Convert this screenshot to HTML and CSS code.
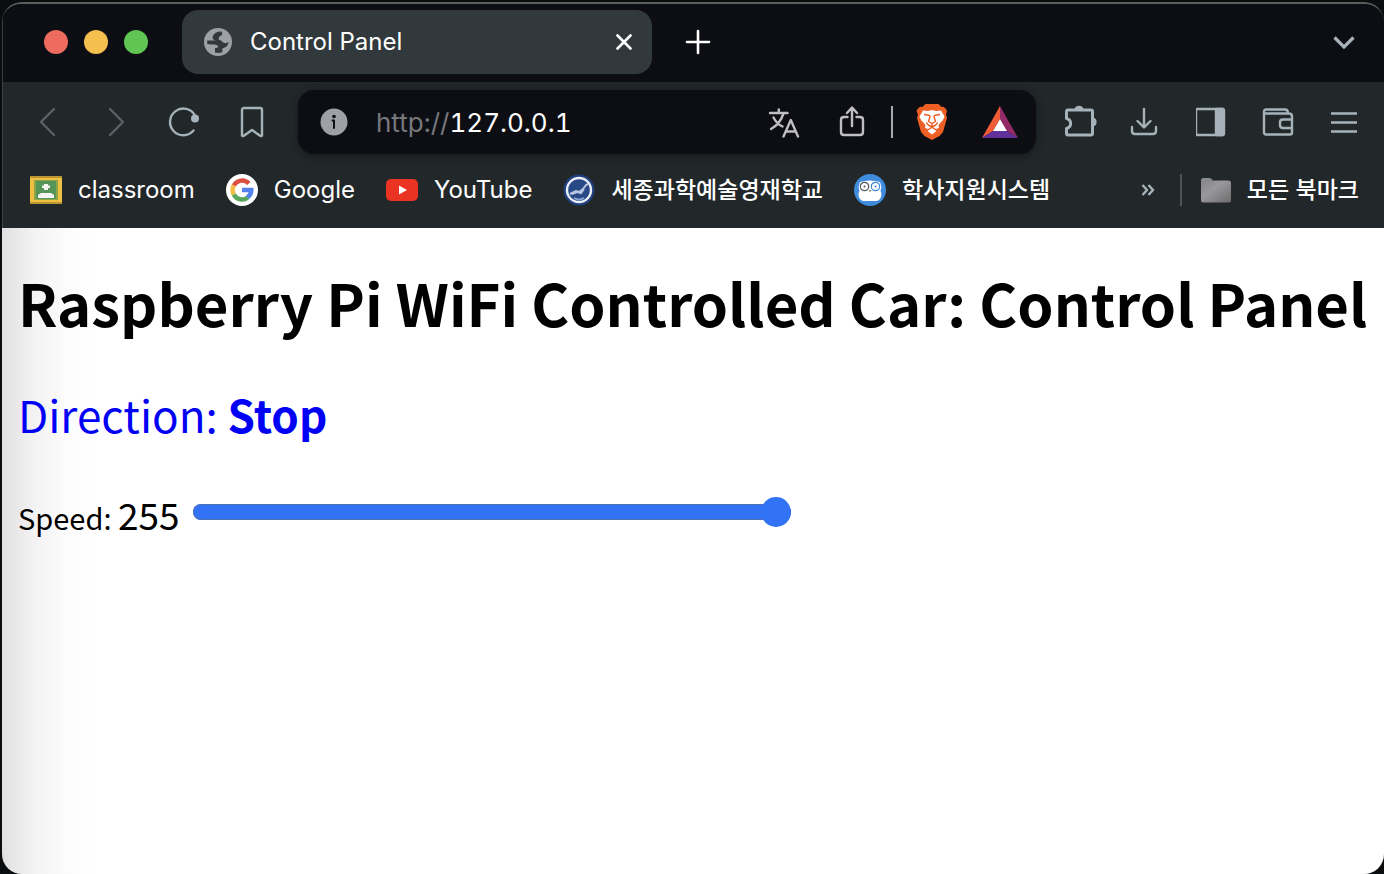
FILE: index.html
```
<!DOCTYPE html>
<html lang="en">
<head>
<meta charset="utf-8">
<title>Control Panel</title>
<link rel="stylesheet" href="styles.css">
</head>
<body>
<div class="window">
  <header class="tabstrip">
    <div class="lights">
      <button class="light red" aria-label="Close window"></button>
      <button class="light yellow" aria-label="Minimize window"></button>
      <button class="light green" aria-label="Zoom window"></button>
    </div>
    <div class="tab">
      <svg width="28" height="28" viewBox="0 0 28 28"><circle cx="14" cy="14" r="14" fill="#9da1a5"/><path d="M17.500 3.500Q12 3 9 7.500C8 11 9.500 12 12 12.500H3.200v3.500C7 17 11 15.500 13.500 17.500c1.500 1.500.5 2.500-2.500 2.500v4.500c4 1 7 0 7.500-.5-.5-2.500-.5-3.500 1-4 2.500-.5 4.500-2.500 5.300-6-2.300 1.500-5 1.500-6.300 0-1-1.500-2-2-4-2.500.5-2 .5-3.500 3-4Q19 6 17.500 3.500z" fill="#32393c"/></svg>
      <span class="tab-title">Control Panel</span>
      <button class="icon-button small" aria-label="Close tab"><svg width="16" height="16" viewBox="0 0 16 16"><path d="M1.500 1.500l13 13M14.500 1.500l-13 13" stroke="#fff" stroke-width="2.600" stroke-linecap="round"/></svg></button>
    </div>
    <button class="icon-button new-tab" aria-label="New tab"><svg width="26" height="26" viewBox="0 0 26 26"><path d="M13 2v22M2 13h22" stroke="#fff" stroke-width="2.600" stroke-linecap="round"/></svg></button>
    <button class="icon-button tab-search" aria-label="Search tabs"><svg width="24" height="24" viewBox="0 0 24 24" fill="none"><path d="M2.500 7.500l9.500 9.500 9.500-9.500" stroke="#a6b2ba" stroke-width="3.200"/></svg></button>
  </header>

  <nav class="toolbar">
    <div class="nav-buttons">
      <button class="icon-button dim" aria-label="Back"><svg width="32" height="32" viewBox="0 0 32 32"><path d="M22 3L9 16l13 13"/></svg></button>
      <button class="icon-button dim" aria-label="Forward"><svg width="32" height="32" viewBox="0 0 32 32"><path d="M10 3l13 13-13 13"/></svg></button>
      <button class="icon-button" aria-label="Reload"><svg width="32" height="32" viewBox="0 0 32 32"><path d="M27 9.500A13.300 13.300 0 1 0 25.500 24.500"/><circle cx="27" cy="12.500" r="4" fill="#a6b2ba" stroke="none"/></svg></button>
      <button class="icon-button" aria-label="Bookmark this page"><svg width="32" height="32" viewBox="0 0 32 32"><path d="M8 2h16q2 0 2 2v25.500q-.5 1-1.500.5L16 24l-8.500 6q-1 .5-1.500-.5V4q0-2 2-2z"/></svg></button>
    </div>
    <div class="address">
      <button class="icon-button small" aria-label="Site information"><svg width="28" height="28" viewBox="0 0 28 28"><circle cx="14" cy="14" r="13.500" fill="#9da1a5" stroke="none"/><circle cx="14" cy="8.500" r="1.800" fill="#0d0e13" stroke="none"/><path d="M12.500 12.500h1.500v7.500" stroke="#0d0e13" stroke-width="2"/></svg></button>
      <span class="url"><span class="scheme">http://</span>127.0.0.1</span>
      <div class="address-actions">
        <button class="icon-button pale" aria-label="Translate"><svg width="32" height="32" viewBox="0 0 32 32"><path d="M2 7h17.500M10.800 3.500V7M15.500 7.500C13 15 8.500 20 3 23M5.500 11.500c2 4 5 7 9 9M15.500 30.500L22.800 14 30 30.500M18 25.500h9.500"/></svg></button>
        <button class="icon-button pale" aria-label="Share"><svg width="32" height="32" viewBox="0 0 32 32"><path d="M16 20V2M11 7l5-5.500L21 7M11.500 11H8q-3 0-3 3v12q0 3 3 3h16q3 0 3-3V14q0-3-3-3h-3.500"/></svg></button>
        <span class="divider bright"></span>
        <button class="icon-button" aria-label="Brave Shields"><svg class="solid" width="32" height="36" viewBox="0 0 32 36"><path d="M9.500 0h13l3 3c2-1 4 1 5.500 4L30 10.500l1 3.500-4 14-3.500 4L16 36l-7.500-4L5 28 1 14l1-3.500L.500 7C2 4 4 2 6.500 3z" fill="#ed5f25"/><path d="M7 6.500l5 .5 4-1 4 1 5-.5 3.500 6-1.500 3.500-4.500 5 .5 3-3 1-4-2.500-4 2.500-3-1 .5-3-4.500-5-1.500-3.500zM16 24l4.500 3-4.500 3.500-4.500-3.500z" fill="#fff"/><path d="M8.500 10.500l5 1 .5 1-1.500 5 3.500 2 3.500-2-1.500-5 .5-1 5-1M16 19.500V22M10.500 19l2.500 2.500L16 23l3-1.500 2.500-2.500" fill="none" stroke="#ed5f25" stroke-width="1.400"/></svg></button>
        <button class="icon-button" aria-label="Brave Rewards"><svg class="solid" width="36" height="32" viewBox="0 0 36 32"><path d="M18 0L0 32l11-7 7-12z" fill="#f15b36"/><path d="M18 0l18 32-11-7-7-12z" fill="#932c66"/><path d="M0 32h36l-11-7H11z" fill="#62309a"/><path d="M18 13l7 12H11z" fill="#fff"/></svg></button>
      </div>
    </div>
    <div class="tools">
      <button class="icon-button" aria-label="Extensions"><svg width="40" height="40" viewBox="0 0 40 40"><path d="M9 8h22q1.500 0 1.500 1.500v22q0 1.500-1.500 1.500H8q-1.500 0-1.500-1.500v-5c5.500-1.500 5.500-8.500 0-10V9.500Q6.500 8 8 8z" stroke-width="3"/><path d="M14.500 7a4.800 4.800 0 0 1 9 0zM33.500 15.500a4.800 4.800 0 0 1 0 9z" fill="#a6b2ba" stroke="none"/></svg></button>
      <button class="icon-button" aria-label="Downloads"><svg width="32" height="32" viewBox="0 0 32 32"><path d="M14 3v18M7.500 15l6.500 6.500 6.500-6.500M2 21v4q0 3 3 3h18q3 0 3-3v-4"/></svg></button>
      <button class="icon-button" aria-label="Side panel"><svg width="32" height="32" viewBox="0 0 32 32"><rect x="0" y="3" width="28" height="26" rx="1.500"/><path d="M20 3h7v26h-7z" fill="#a6b2ba"/></svg></button>
      <button class="icon-button" aria-label="Wallet"><svg width="32" height="32" viewBox="0 0 32 32"><path d="M2 7.500h25q3 0 3 3V26.500q0 2-2 2H4q-2 0-2-2v-21q0-2 2-2h19q3 0 3 4M30 13.500h-9q-3 0-3 3v2.500q0 3 3 3h9"/></svg></button>
      <button class="icon-button" aria-label="Menu"><svg width="32" height="32" viewBox="0 0 32 32"><path d="M3 7.500h26M3 16.500h26M3 25.500h26" stroke-linecap="butt"/></svg></button>
    </div>
  </nav>

  <nav class="bookmarks">
    <a class="bookmark" href="#"><svg width="32" height="32" viewBox="0 0 32 32"><path d="M0 2h32v28H0z" fill="#b99533"/><path d="M0 4h32v24H0z" fill="#edbf42"/><path d="M4 6h24v20H4z" fill="#8fa443"/><path d="M6 7h20v18H6z" fill="#559557"/><path d="M14 10h4v1.500h2v2.500h-2v2h-4v-2h-2v-2.500h2zM8 24v-3l3-2h10l3 2v3z" fill="#f4f4f4"/></svg><span>classroom</span></a>
    <a class="bookmark" href="#"><svg width="32" height="32" viewBox="0 0 32 32" fill="none"><circle cx="16" cy="16" r="16" fill="#fff"/><path d="M7.800 11.500A9.300 9.300 0 0 1 22.800 9.500" stroke="#d95040" stroke-width="4.500"/><path d="M7.800 11.500a9.300 9.300 0 0 0 0 9" stroke="#f2bd42" stroke-width="4.500"/><path d="M7.800 20.500a9.300 9.300 0 0 0 14 3" stroke="#58a55c" stroke-width="4.500"/><path d="M21.500 23.500c2.500-2 3.800-4.500 3.800-7.500H16" stroke="#5383ec" stroke-width="4.500"/></svg><span>Google</span></a>
    <a class="bookmark" href="#"><svg width="32" height="32" viewBox="0 0 32 32"><rect y="5" width="32" height="22" rx="5" fill="#ea3323"/><path d="M13 11.500l8 4.500-8 4.500z" fill="#fff"/></svg><span>YouTube</span></a>
    <a class="bookmark korean" href="#" lang="ko"><svg width="32" height="32" viewBox="0 0 32 32" fill="none"><circle cx="16" cy="16" r="15.500" fill="#203f7d"/><circle cx="16" cy="16" r="12" fill="#284985" stroke="#e8edf7" stroke-width="2.400"/><path d="M7 20l4-2 2-1 3 1 4-3 3-4 2-1M9 20l5-2 4 1 3-4" stroke="#b7c5e0" stroke-width="2"/><path d="M11 24q5 3 10 0" stroke="#8da4cd" stroke-width="2"/></svg><span>세종과학예술영재학교</span></a>
    <a class="bookmark korean" href="#" lang="ko"><svg width="32" height="32" viewBox="0 0 32 32" fill="none"><circle cx="16" cy="16" r="16" fill="#3f8bdc"/><path d="M6 8q10-3 20 0l1.500 5-1 4c2 3 1 9-4 10h-13c-5-1-6-7-4-10l-1-4z" fill="#fff"/><circle cx="10.500" cy="12.500" r="4.200" stroke="#555b61" stroke-width="1.200"/><circle cx="21.500" cy="12.500" r="4.200" stroke="#3f8bdc" stroke-width="1.200"/><circle cx="10.500" cy="12.500" r="1" fill="#555b61"/><circle cx="21.500" cy="12.500" r="1" fill="#3f8bdc"/><path d="M15 16l1 1.500 1-1.500" stroke="#777"/></svg><span>학사지원시스템</span></a>
    <div class="more">
      <button class="icon-button small" aria-label="More bookmarks"><svg width="16" height="16" viewBox="0 0 16 16" fill="none"><path d="M2.500 3l4.500 5-4.500 5M8.500 3l4.500 5-4.500 5" stroke="#a6b2ba" stroke-width="2.400"/></svg></button>
      <span class="divider"></span>
      <a class="bookmark korean" href="#" lang="ko"><svg width="32" height="32" viewBox="0 0 32 32"><defs><linearGradient id="folder" x2="1" y2="1"><stop stop-color="#858589"/><stop offset=".4" stop-color="#99999d"/><stop offset="1" stop-color="#6c6c6c"/></linearGradient></defs><path d="M1 7q0-3 2-3h7l3 2h-1v3H1z" fill="#8a8a8b"/><rect x="1" y="6.500" width="30" height="22" rx="2.500" fill="url(#folder)"/></svg><span>모든 북마크</span></a>
    </div>
  </nav>

  <main class="page">
    <h1>Raspberry Pi WiFi Controlled Car: Control Panel</h1>
    <p class="direction">Direction: <b>Stop</b></p>
    <div class="speed">
      <label for="speed">Speed: <output class="value" for="speed">255</output></label>
      <input id="speed" class="slider" type="range" min="0" max="255" value="255">
    </div>
  </main>
</div>
</body>
</html>
```
FILE: styles.css
```
* { box-sizing: border-box; }

body {
  margin: 0;
  min-height: 100vh;
  display: flex;
  padding: 2px 0 0 2px;
  background: #0a0c0e;
  font-family: Inter, "Noto Sans CJK KR", sans-serif;
}

button {
  border: 0;
  padding: 0;
  background: none;
}

.window {
  flex: 1;
  min-width: 0;
  display: flex;
  flex-direction: column;
  border-top: 2px solid #5b5d5f;
  border-radius: 20px;
  background: #22282a;
  overflow: hidden;
}

.tabstrip {
  display: flex;
  align-items: center;
  height: 78px;
  padding: 0 20px 2px 41px;
  border-left: 1px solid #3a3c3f;
  background: #0d0e13;
}

.lights {
  display: flex;
  gap: 16px;
  margin-right: 34px;
}

.light {
  width: 24px;
  height: 24px;
  border-radius: 50%;
}

.red { background: #ec6a5e; }
.yellow { background: #f4bf4f; }
.green { background: #61c554; }

.tab {
  display: flex;
  align-items: center;
  flex: 0 1 470px;
  height: 64px;
  padding: 0 14px 0 22px;
  border-radius: 16px;
  background: #32393c;
  color: #fff;
}

.tab-title {
  flex: 1;
  margin-left: 18px;
  padding-bottom: 2px;
  font-size: 24px;
}

.icon-button {
  display: flex;
  align-items: center;
  justify-content: center;
  flex: none;
  width: 40px;
  height: 40px;
}

.icon-button.small { width: 28px; }
.new-tab { margin-left: 26px; }
.tab-search { margin-left: auto; }

.toolbar {
  display: flex;
  align-items: center;
  height: 80px;
  padding: 0 20px 0 25px;
  border-left: 1px solid #3e4345;
}

.toolbar svg {
  fill: none;
  stroke: #a6b2ba;
  stroke-width: 2.4;
  stroke-linecap: round;
  stroke-linejoin: round;
}

.toolbar .dim svg { stroke: #596267; }
.toolbar .pale svg { stroke: #bfbfc1; }
.toolbar .solid { stroke: none; }

.nav-buttons {
  display: flex;
  gap: 28px;
  margin-right: 26px;
}

.address {
  display: flex;
  align-items: center;
  flex: 1;
  min-width: 0;
  height: 64px;
  padding: 0 16px 0 22px;
  border-radius: 16px;
  background: #0d0e13;
  box-shadow: 0 2px 8px #15191b;
}

.url {
  flex: 1;
  margin-left: 28px;
  color: #fff;
  font-size: 26px;
  font-variant-numeric: tabular-nums;
}

.scheme { color: #77787b; }

.address-actions {
  display: flex;
  align-items: center;
  gap: 28px;
}

.divider {
  width: 2px;
  height: 32px;
  background: #4d5356;
}

.divider.bright {
  margin: 0 -9px;
  background: #a9aaac;
}

.tools {
  display: flex;
  gap: 26px;
  margin-left: 24px;
}

.bookmarks {
  display: flex;
  align-items: center;
  gap: 31px;
  height: 66px;
  padding: 0 25px 10px 27px;
  border-left: 1px solid #3e4345;
}

.bookmark {
  display: flex;
  align-items: center;
  gap: 16px;
  color: #fff;
  font-size: 24px;
  white-space: nowrap;
  text-decoration: none;
}

.bookmark span { padding-bottom: 2px; }

.korean {
  font-family: "Noto Sans CJK KR", sans-serif;
  font-size: 23px;
  font-weight: 500;
  line-height: 32px;
}

.korean span { padding-bottom: 4px; }

.more {
  display: flex;
  align-items: center;
  gap: 18px;
  margin-left: auto;
}

.more .bookmark { gap: 15px; }

.page {
  flex: 1;
  padding: 38px 16px;
  background: linear-gradient(90deg, #e0e0e0, #f2f2f2 30px, #fcfcfc 66px, #fff 92px);
  color: #000;
  font-family: "Noto Sans CJK KR", sans-serif;
}

h1 {
  margin: 0;
  font-size: 58px;
  line-height: 72px;
  white-space: nowrap;
}

.direction {
  margin: 44px 0 38px;
  color: #0000f5;
  font-size: 44px;
  line-height: 64px;
}

.speed {
  display: flex;
  align-items: flex-start;
  gap: 13px;
  font-size: 29px;
  line-height: 60px;
}

.value { font-size: 37px; }

.slider {
  appearance: none;
  flex: 0 1 598px;
  min-width: 0;
  height: 16px;
  margin: 20px 0;
  border-radius: 8px;
  background: #3273f6;
  box-shadow: inset 0 0 0 1px #4f73b5;
}

.slider::-webkit-slider-thumb {
  appearance: none;
  width: 30px;
  height: 30px;
  border-radius: 50%;
  background: #3273f6;
}
```
